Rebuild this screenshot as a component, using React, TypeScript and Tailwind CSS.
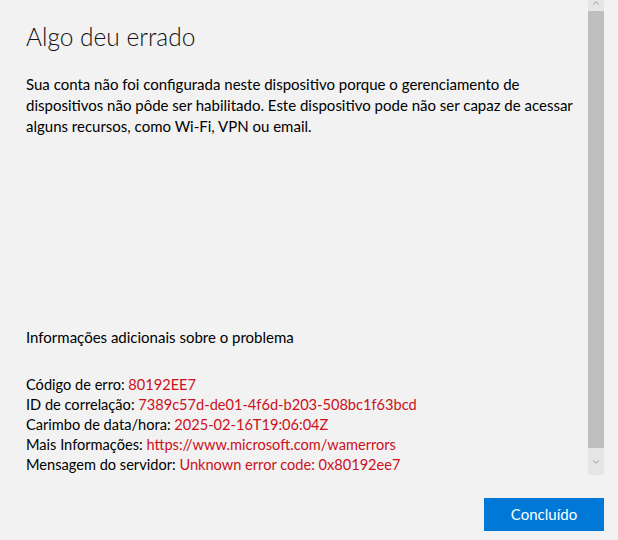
import { ChevronUp, ChevronDown } from 'lucide-react'

const details = [
  { label: 'Código de erro:', value: '80192EE7' },
  { label: 'ID de correlação:', value: '7389c57d-de01-4f6d-b203-508bc1f63bcd' },
  { label: 'Carimbo de data/hora:', value: '2025-02-16T19:06:04Z' },
  { label: 'Mais Informações:', value: 'https://www.microsoft.com/wamerrors' },
  { label: 'Mensagem do servidor:', value: 'Unknown error code: 0x80192ee7' },
]

export default function App() {
  return (
    <div
      className="w-[618px] h-[540px] bg-[#f2f2f2] flex flex-col text-[#000] overflow-hidden"
      style={{ fontFamily: '"Segoe UI", Lato, sans-serif' }}
    >
      <div className="flex h-[475px]">
        <div className="flex-1 pl-[26px] pt-[20px]">
          <h1 className="text-[24.5px] leading-[34px] font-light text-[#111]">Algo deu errado</h1>
          <p className="mt-[20px] text-[15px] leading-[21px] w-[550px]">
            Sua conta não foi configurada neste dispositivo porque o gerenciamento de dispositivos
            não pôde ser habilitado. Este dispositivo pode não ser capaz de acessar alguns recursos,
            como Wi-Fi, VPN ou email.
          </p>
          <p className="mt-[190px] text-[15px] leading-[21px]">Informações adicionais sobre o problema</p>
          <div className="mt-[27px] text-[14.6px] leading-[20px]">
            {details.map((d) => (
              <p key={d.label}>
                {d.label} <span className="text-[#cc1020]">{d.value}</span>
              </p>
            ))}
          </div>
        </div>
        <div className="w-[16px] flex flex-col bg-[#f2f2f2]">
          <div className="h-[11px] bg-[#e6e6e6] flex items-start justify-center overflow-hidden">
            <ChevronUp className="w-[10px] h-[10px] -mt-[2px] text-[#858585]" strokeWidth={2} />
          </div>
          <div className="flex-1 bg-[#bfbfbf]" />
          <div className="h-[27px] bg-[#e6e6e6] flex items-center justify-center">
            <ChevronDown className="w-[10px] h-[10px] text-[#858585]" strokeWidth={2} />
          </div>
        </div>
        <div className="w-[14px]" />
      </div>
      <div className="flex justify-end pr-[14px] pt-[23px]">
        <button className="w-[120px] h-[33px] bg-[#0078d7] text-white text-[15px]">Concluído</button>
      </div>
    </div>
  )
}
